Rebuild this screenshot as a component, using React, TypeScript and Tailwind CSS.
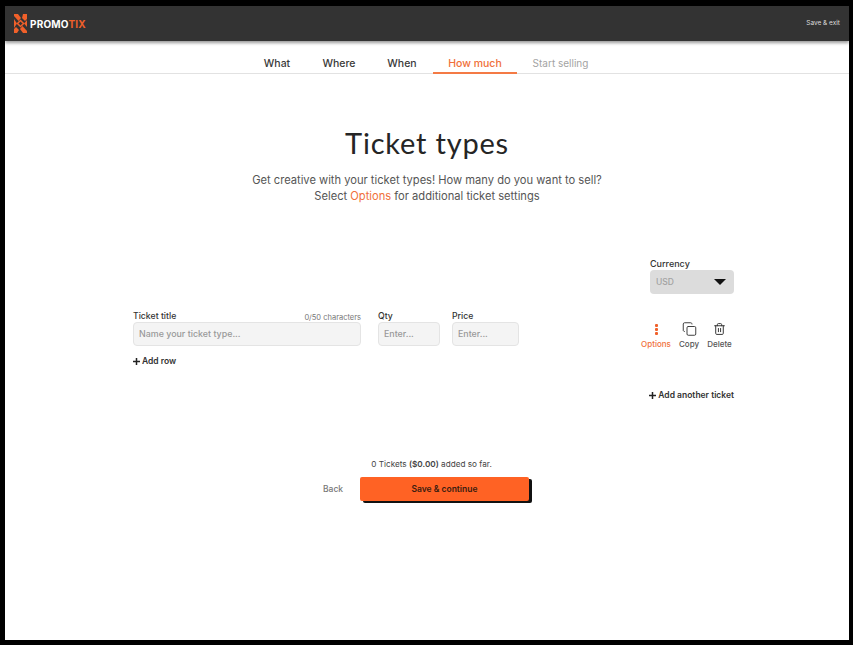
import { Copy, Trash2 } from 'lucide-react';

const font = "font-['Inter','Noto_Sans',sans-serif]";

function Logo() {
    return (
        <div className="flex items-center gap-[3px]">
            <svg width="13" height="19" viewBox="0 0 13 19" fill="#f0602a">
                <path d="M0 0h4l3 4-2.500 3L0 2z" />
                <path d="M9 0h4v5l-2 2-3-3z" />
                <path d="M0 5l3 4.500L0 14z" />
                <path d="M13 6v7l-3-3.500z" />
                <path d="M6.500 6.500l3 3-3 3-3-3z" fill="none" stroke="#f0602a" strokeWidth="1.500" />
                <path d="M0 19v-4l2-2 3 3-2 3z" />
                <path d="M13 19H9l-3-4 2.500-3 4.500 5z" />
            </svg>
            <span className="text-[10px] font-bold tracking-[0.2px] text-white leading-none">
                PROMO<span className="text-[#f0602a]">TIX</span>
            </span>
        </div>
    );
}

function Step({ label, active, muted, className }: { label: string; active?: boolean; muted?: boolean; className: string }) {
    return (
        <div
            className={`${className} flex h-[33px] items-center justify-center border-b-2 pt-[14px] ${
                muted ? 'text-[10px] font-normal' : 'text-[10.500px] font-medium'
            } ${active ? 'border-[#f47a45] text-[#f0703a]' : 'border-transparent'} ${muted ? 'text-[#a3a3a3]' : ''} ${
                !active && !muted ? 'text-[#3a3a3a]' : ''
            }`}
        >
            {label}
        </div>
    );
}

function Field({ label, placeholder, className, aside }: { label: string; placeholder: string; className: string; aside?: string }) {
    return (
        <div className={className}>
            <div className="flex h-[13px] items-end justify-between pb-[1px] leading-none">
                <span className="text-[8.700px] font-medium text-[#333]">{label}</span>
                {aside && <span className="text-[7.500px] text-[#777]">{aside}</span>}
            </div>
            <div className="flex h-[24px] items-center rounded-[4px] border border-[#e4e4e4] bg-[#f4f4f4] px-[5px] text-[8.900px] font-medium text-[#999]">
                {placeholder}
            </div>
        </div>
    );
}

function Plus() {
    return (
        <svg width="7" height="7" viewBox="0 0 7 7" className="mr-[2px]">
            <path d="M3.500 0v7M0 3.500h7" stroke="#222" strokeWidth="1.500" />
        </svg>
    );
}

export default function App() {
    return (
        <div className={`${font} h-[645px] w-[853px] overflow-hidden bg-black pt-[6px] pb-[5px] pl-[5px] pr-[4px]`}>
            <div className="flex h-full flex-col bg-white">
                <header className="flex h-[35px] shrink-0 items-center justify-between bg-[#333333] pl-[9px] pr-[9px] shadow-[0_2px_3px_rgba(0,0,0,0.4)]">
                    <Logo />
                    <span className="text-[6.500px] text-[#dddddd]">Save &amp; exit</span>
                </header>

                <nav className="flex h-[33px] shrink-0 justify-start border-b border-[#e2e2e2] pl-[242px]">
                    <Step label="What" className="w-[60px]" />
                    <Step label="Where" className="w-[64px]" />
                    <Step label="When" className="w-[62px]" />
                    <Step label="How much" active className="w-[84px]" />
                    <Step label="Start selling" muted className="w-[87px]" />
                </nav>

                <main className="flex flex-col items-center">
                    <h1 className="mt-[47px] font-['Lato',sans-serif] text-[29px] leading-[44px] font-normal tracking-[0.800px] text-[#252525]">
                        Ticket types
                    </h1>
                    <p className="mt-[7px] text-center text-[11.150px] leading-[16px] text-[#555]">
                        Get creative with your ticket types! How many do you want to sell?
                        <br />
                        Select <span className="text-[#f0703a]">Options</span> for additional ticket settings
                    </p>

                    <div className="mt-[53px] ml-[128px] w-[601px] self-start">
                        <div className="ml-[517px] w-[84px]">
                            <div className="h-[13px] text-[9px] leading-[13px] font-medium text-[#333]">Currency</div>
                            <div className="flex h-[24px] items-center justify-between rounded-[4px] bg-[#dcdcdc] pl-[6px] pr-[8px]">
                                <span className="text-[8.500px] font-medium text-[#a2a2a2]">USD</span>
                                <span className="h-0 w-0 border-x-[6px] border-t-[6px] border-x-transparent border-t-[#111]" />
                            </div>
                        </div>

                        <div className="mt-[15px] flex">
                            <Field label="Ticket title" aside="0/50 characters" placeholder="Name your ticket type..." className="w-[228px]" />
                            <Field label="Qty" placeholder="Enter..." className="ml-[17px] w-[62px]" />
                            <Field label="Price" placeholder="Enter..." className="ml-[12px] w-[67px]" />
                            <div className="ml-[122px] flex pt-[12px] text-[8px] font-medium text-[#555]">
                                <div className="flex w-[30px] flex-col items-center text-[#f0703a]">
                                    <div className="flex h-[16px] flex-col items-center justify-center gap-[1px]">
                                        <span className="h-[3px] w-[3px] rounded-[1px] bg-[#f0602a]" />
                                        <span className="h-[3px] w-[3px] rounded-[1px] bg-[#f0602a]" />
                                        <span className="h-[3px] w-[3px] rounded-[1px] bg-[#f0602a]" />
                                    </div>
                                    <span className="mt-[1px]">Options</span>
                                </div>
                                <div className="ml-[3px] flex w-[30px] flex-col items-center">
                                    <Copy size={15} strokeWidth={1.500} className="h-[16px] text-[#333]" />
                                    <span className="mt-[1px]">Copy</span>
                                </div>
                                <div className="ml-[1px] flex w-[29px] flex-col items-center">
                                    <Trash2 size={13} strokeWidth={1.800} className="h-[16px] text-[#333]" />
                                    <span className="mt-[1px]">Delete</span>
                                </div>
                            </div>
                        </div>

                        <div className="mt-[5px] flex items-center text-[8.500px] font-semibold text-[#333]">
                            <Plus />
                            Add row
                        </div>
                        <div className="mt-[21px] flex items-center justify-end text-[8.500px] font-semibold text-[#333]">
                            <Plus />
                            Add another ticket
                        </div>
                    </div>

                    <p className="mt-[56px] ml-[9px] text-[8.200px] text-[#444]">
                        0 Tickets <b className="font-semibold">($0.00)</b> added so far.
                    </p>
                    <div className="mt-[7px] ml-[318px] flex items-center self-start">
                        <span className="w-[37px] pt-[1px] text-[8.500px] font-medium text-[#777]">Back</span>
                        <button className="h-[24px] w-[169px] rounded-[2px] bg-[#ff6224] pt-[1px] text-[8.500px] font-semibold text-[#3a1c10] shadow-[3px_2px_0_#111]">
                            Save &amp; continue
                        </button>
                    </div>
                </main>
            </div>
        </div>
    );
}
